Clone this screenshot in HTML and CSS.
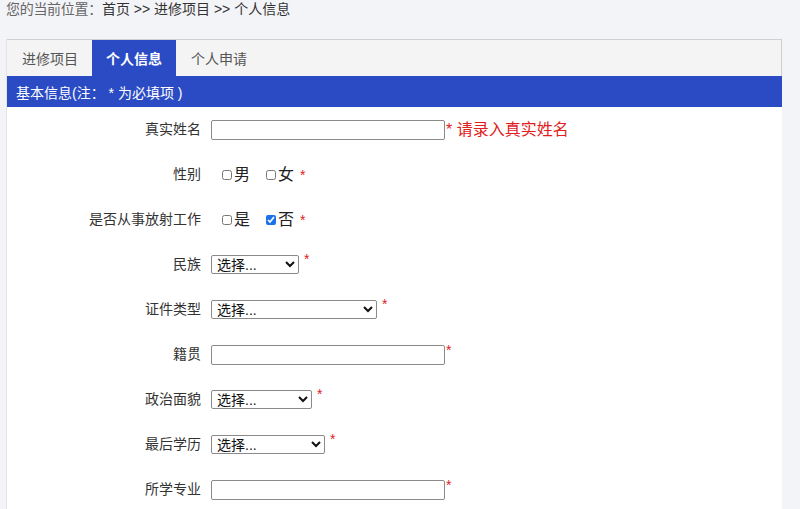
FILE: index.html
```html
<!DOCTYPE html>
<html lang="zh-CN">
<head>
  <meta charset="UTF-8">
  <title>个人信息</title>
  <link rel="stylesheet" href="styles.css">
</head>
<body>

<div class="crumb">
  <span class="crumb-label">您的当前位置：</span>首页 &gt;&gt; 进修项目 &gt;&gt; 个人信息
</div>

<div class="panel">
  <div class="tabs">
    <a class="tab">进修项目</a>
    <a class="tab active">个人信息</a>
    <a class="tab">个人申请</a>
  </div>
  <div class="bar">基本信息(注： * 为必填项 )</div>

  <form class="form">
    <div class="row">
      <label class="label">真实姓名</label>
      <div class="field">
        <input type="text" class="text">
        <span class="tip">* 请录入真实姓名</span>
      </div>
    </div>

    <div class="row">
      <label class="label">性别</label>
      <div class="field">
        <label class="check"><input type="checkbox">男</label>
        <label class="check"><input type="checkbox">女</label>
        <span class="star gap">*</span>
      </div>
    </div>

    <div class="row">
      <label class="label">是否从事放射工作</label>
      <div class="field">
        <label class="check"><input type="checkbox">是</label>
        <label class="check"><input type="checkbox" checked>否</label>
        <span class="star gap">*</span>
      </div>
    </div>

    <div class="row">
      <label class="label">民族</label>
      <div class="field">
        <select class="sel w88"><option>选择...</option></select>
        <span class="star up">*</span>
      </div>
    </div>

    <div class="row">
      <label class="label">证件类型</label>
      <div class="field">
        <select class="sel w166"><option>选择...</option></select>
        <span class="star up">*</span>
      </div>
    </div>

    <div class="row">
      <label class="label">籍贯</label>
      <div class="field">
        <input type="text" class="text">
        <span class="star tight">*</span>
      </div>
    </div>

    <div class="row">
      <label class="label">政治面貌</label>
      <div class="field">
        <select class="sel w101"><option>选择...</option></select>
        <span class="star up">*</span>
      </div>
    </div>

    <div class="row">
      <label class="label">最后学历</label>
      <div class="field">
        <select class="sel w114"><option>选择...</option></select>
        <span class="star up">*</span>
      </div>
    </div>

    <div class="row">
      <label class="label">所学专业</label>
      <div class="field">
        <input type="text" class="text">
        <span class="star tight">*</span>
      </div>
    </div>
  </form>
</div>

</body>
</html>
```

FILE: styles.css
```css
body {
  margin: 0;
  padding: 0 18px 0 6px;
  background-color: #f3f4f8;
  font-family: "Liberation Sans", "Noto Sans CJK SC", sans-serif;
  font-size: 14px;
  color: #333;
  overflow: hidden;
}

.crumb {
  height: 18px;
  line-height: 18px;
  color: #333;
  margin-bottom: 21px;
}

.crumb-label {
  color: #666;
  letter-spacing: -0.3px;
}

.panel {
  background-color: #fff;
  border-left: 1px solid #e4e4e4;
  min-height: 480px;
}

.tabs {
  display: flex;
  height: 36px;
  background-color: #f4f4f4;
  border: 1px solid #cfcfcf;
  border-left: none;
  border-bottom: none;
}

.tab {
  padding: 3px 14px 0 15px;
  line-height: 33px;
  color: #555;
  cursor: pointer;
}

.tab.active {
  background-color: #2a4bc4;
  color: #fff;
  font-weight: bold;
  padding-left: 14px;
}

.bar {
  height: 28px;
  line-height: 28px;
  padding: 3px 0 0 9px;
  background-color: #2a4bc4;
  color: #fff;
}

.form {
  padding-top: 0;
}

.row {
  display: grid;
  grid-template-columns: 194px 1fr;
  column-gap: 10px;
  align-items: center;
  height: 45px;
}

.label {
  text-align: right;
  line-height: 18px;
  margin-top: -2px;
  color: #333;
}

.field {
  display: flex;
  align-items: center;
  line-height: 20px;
}

.text {
  width: 234px;
  height: 20px;
  box-sizing: border-box;
  border: 1px solid #8a8a8a;
  border-radius: 2px;
  margin: 1px 0 0;
  padding: 0 4px;
}

.sel {
  height: 19px;
  box-sizing: border-box;
  border: 1px solid #8a8a8a;
  border-radius: 2px;
  margin: 0;
  padding: 0 1px;
  font-family: "Liberation Sans", "Noto Sans CJK SC", sans-serif;
  font-size: 14px;
  line-height: 17px;
  color: #111;
  background-color: #fff;
}

.w88 { width: 88px; }
.w166 { width: 166px; }
.w101 { width: 101px; }
.w114 { width: 114px; }

.check {
  display: flex;
  align-items: center;
  margin-left: 11px;
  margin-right: 5px;
  font-size: 16px;
  line-height: 20px;
  color: #222;
}

.check input {
  width: 10px;
  height: 10px;
  margin: 1px 2px 0 0;
  accent-color: #1a73e8;
}

.tip {
  color: #e0201c;
  font-size: 16px;
  margin-left: 1px;
}

.star {
  color: #e0201c;
  font-size: 14px;
}

.star.gap {
  margin-left: 1px;
}

.star.up {
  margin-left: 5px;
  align-self: flex-start;
  line-height: 14px;
  margin-top: -3px;
}

.star.tight {
  align-self: flex-start;
  line-height: 14px;
  margin-left: 1px;
  margin-top: -1px;
}
```
